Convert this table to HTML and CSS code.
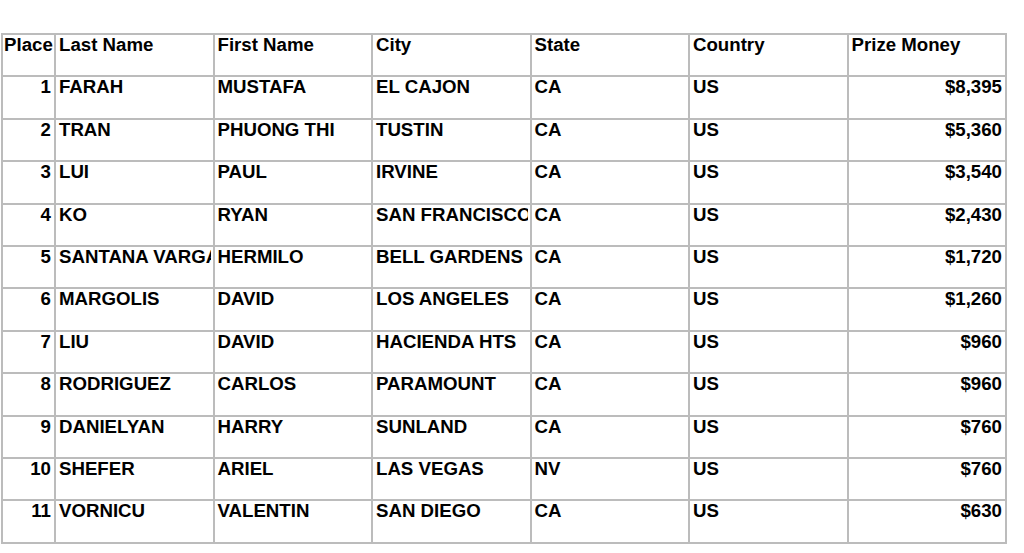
FILE: index.html
```html
<!DOCTYPE html>
<html>
<head>
<meta charset="utf-8">
<link rel="stylesheet" href="styles.css">
</head>
<body>
<table class="results">
  <colgroup>
    <col class="c-place">
    <col class="c-wide">
    <col class="c-wide">
    <col class="c-wide">
    <col class="c-wide">
    <col class="c-wide">
    <col class="c-wide">
  </colgroup>
  <thead>
    <tr><th>Place</th><th>Last Name</th><th>First Name</th><th>City</th><th>State</th><th>Country</th><th>Prize Money</th></tr>
  </thead>
  <tbody>
    <tr><td class="num">1</td><td>FARAH</td><td>MUSTAFA</td><td>EL CAJON</td><td>CA</td><td>US</td><td class="num">$8,395</td></tr>
    <tr><td class="num">2</td><td>TRAN</td><td>PHUONG THI</td><td>TUSTIN</td><td>CA</td><td>US</td><td class="num">$5,360</td></tr>
    <tr><td class="num">3</td><td>LUI</td><td>PAUL</td><td>IRVINE</td><td>CA</td><td>US</td><td class="num">$3,540</td></tr>
    <tr><td class="num">4</td><td>KO</td><td>RYAN</td><td><span class="cut">SAN FRANCISCO</span></td><td>CA</td><td>US</td><td class="num">$2,430</td></tr>
    <tr><td class="num">5</td><td><span class="cut">SANTANA VARGAS</span></td><td>HERMILO</td><td>BELL GARDENS</td><td>CA</td><td>US</td><td class="num">$1,720</td></tr>
    <tr><td class="num">6</td><td>MARGOLIS</td><td>DAVID</td><td>LOS ANGELES</td><td>CA</td><td>US</td><td class="num">$1,260</td></tr>
    <tr><td class="num">7</td><td>LIU</td><td>DAVID</td><td>HACIENDA HTS</td><td>CA</td><td>US</td><td class="num">$960</td></tr>
    <tr><td class="num">8</td><td>RODRIGUEZ</td><td>CARLOS</td><td>PARAMOUNT</td><td>CA</td><td>US</td><td class="num">$960</td></tr>
    <tr><td class="num">9</td><td>DANIELYAN</td><td>HARRY</td><td>SUNLAND</td><td>CA</td><td>US</td><td class="num">$760</td></tr>
    <tr><td class="num">10</td><td>SHEFER</td><td>ARIEL</td><td>LAS VEGAS</td><td>NV</td><td>US</td><td class="num">$760</td></tr>
    <tr><td class="num">11</td><td>VORNICU</td><td>VALENTIN</td><td>SAN DIEGO</td><td>CA</td><td>US</td><td class="num">$630</td></tr>
  </tbody>
</table>
</body>
</html>
```

FILE: styles.css
```css
html, body {
  margin: 0;
  padding: 0;
  background: #ffffff;
}

body {
  padding: 33px 0 0 1px;
  font-family: "Liberation Sans", Arial, sans-serif;
  color: #000000;
}

.results {
  table-layout: fixed;
  border-collapse: collapse;
  width: 1006px;
  font-size: 18.67px;
  font-weight: bold;
}

.c-place { width: 53px; }
.c-wide { width: 158.5px; }

.results th,
.results td {
  border: 2px solid #bcbcbc;
  height: 42.4px;
  box-sizing: border-box;
  padding: 0 2px 0 3px;
  vertical-align: top;
  text-align: left;
  white-space: nowrap;
  overflow: hidden;
  line-height: 19px;
}

.results th:first-child {
  padding: 0 1px;
}

.results td.num {
  text-align: right;
  padding: 0 3px 0 3px;
}

.cut {
  display: block;
  overflow: hidden;
}
```
